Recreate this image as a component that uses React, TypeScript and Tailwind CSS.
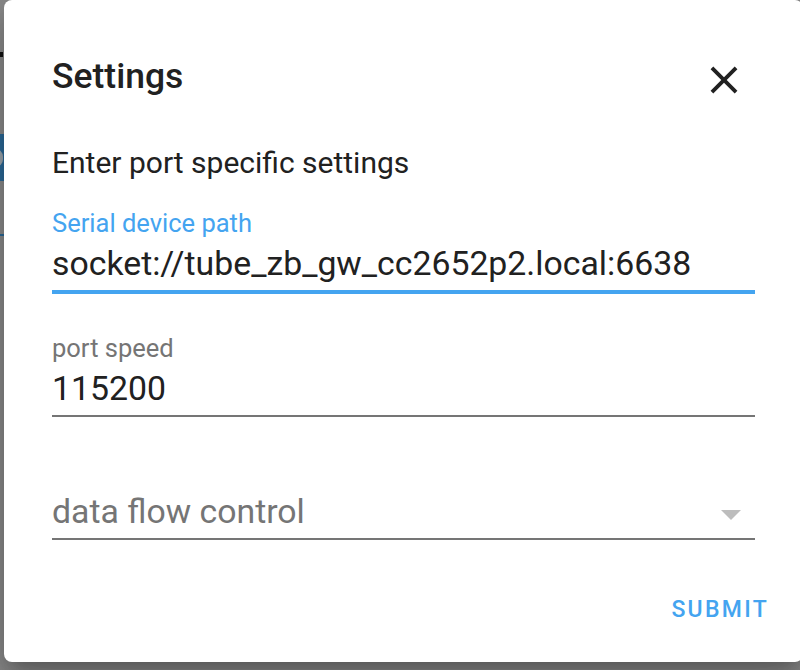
import React from "react";

const font = { fontFamily: "Roboto, 'Noto Sans', sans-serif" };

const CloseIcon = () => (
  <svg
    aria-hidden
    xmlns="http://www.w3.org/2000/svg"
    viewBox="0 0 24 24"
    width="46"
    height="46"
    className="text-[#212121]"
  >
    <path
      fill="currentColor"
      d="M19 6.41 17.59 5 12 10.59 6.41 5 5 6.41 10.59 12 5 17.59 6.41 19 12 13.41 17.59 19 19 17.59 13.41 12z"
    />
  </svg>
);

const TextField = ({
  label,
  value,
  focused,
  className,
}: {
  label: string;
  value: string;
  focused?: boolean;
  className?: string;
}) => (
  <div className={className}>
    <div
      className={`${
        focused ? "text-[#44a4f0]" : "text-[#757575]"
      } text-[25.5px] leading-[30px] whitespace-nowrap`}
    >
      {label}
    </div>
    <div
      className={`${
        focused ? "border-b-[4px] border-[#44a4f0]" : "border-b-[2px] border-[#757575]"
      } mt-[6px] pb-[6px]`}
    >
      <div className="text-[33.8px] leading-[40px] text-[#212121] whitespace-nowrap">
        {value}
      </div>
    </div>
  </div>
);

const SelectField = ({
  placeholder,
  className,
}: {
  placeholder: string;
  className?: string;
}) => (
  <div className={className}>
    <div className="h-[30px]" />
    <div className="mt-[6px] pb-[6px] border-b-[2px] border-[#757575]">
      <div className="flex items-center justify-between h-[40px]">
        <span className="text-[33.8px] leading-[40px] text-[#757575] whitespace-nowrap">
          {placeholder}
        </span>
        <svg
          aria-hidden
          xmlns="http://www.w3.org/2000/svg"
          viewBox="0 0 24 24"
          width="48"
          height="48"
          className="text-[#bdbdbd] mt-[4px]"
        >
          <path fill="currentColor" d="M7 10l5 5 5-5z" />
        </svg>
      </div>
    </div>
  </div>
);

export default function App() {
  return (
    <div
      className="relative w-[800px] h-[670px] overflow-hidden bg-[#8a8a8a]"
      style={font}
    >
      {/* page behind the backdrop */}
      <div className="flex flex-col w-[40px]">
        <div className="mt-[52px] h-[5px] w-[3px] bg-[#111111]" />
        <div className="mt-[77px] h-[47px] w-full bg-[#2b6998] flex items-center">
          <div className="-ml-[12px] w-[15px] h-[18px] rounded-full border-[3px] border-[#9aa4ac]" />
        </div>
        <div className="mt-[53px] h-[2px] w-full bg-[#2b6998]" />
      </div>

      {/* dialog */}
      <div className="absolute left-[4px] top-0 w-[799px] h-[662px] bg-white rounded-[8px] shadow-[0_11px_15px_-7px_rgba(0,0,0,0.2),0_24px_38px_3px_rgba(0,0,0,0.14),0_9px_46px_8px_rgba(0,0,0,0.12)] flex flex-col">
        <div className="px-[48px] pt-[56px]">
          <div className="flex items-center justify-between h-[40px]">
            <h2 className="text-[35.5px] leading-[40px] font-medium text-[#212121]">
              Settings
            </h2>
            <button aria-label="close" className="mt-[8px] mr-[8px]">
              <CloseIcon />
            </button>
          </div>

          <p className="mt-[49px] text-[30px] leading-[36px] text-[#212121] whitespace-nowrap">
            Enter port specific settings
          </p>

          <TextField
            className="mt-[27px]"
            label="Serial device path"
            value="socket://tube_zb_gw_cc2652p2.local:6638"
            focused
          />
          <TextField className="mt-[39px]" label="port speed" value="115200" />
          <SelectField className="mt-[39px]" placeholder="data flow control" />
        </div>

        <div className="flex justify-end pr-[34px] mt-[56px]">
          <button className="text-[23px] leading-[28px] font-medium tracking-[0.1em] text-[#44a4f0]">
            SUBMIT
          </button>
        </div>
      </div>
    </div>
  );
}
